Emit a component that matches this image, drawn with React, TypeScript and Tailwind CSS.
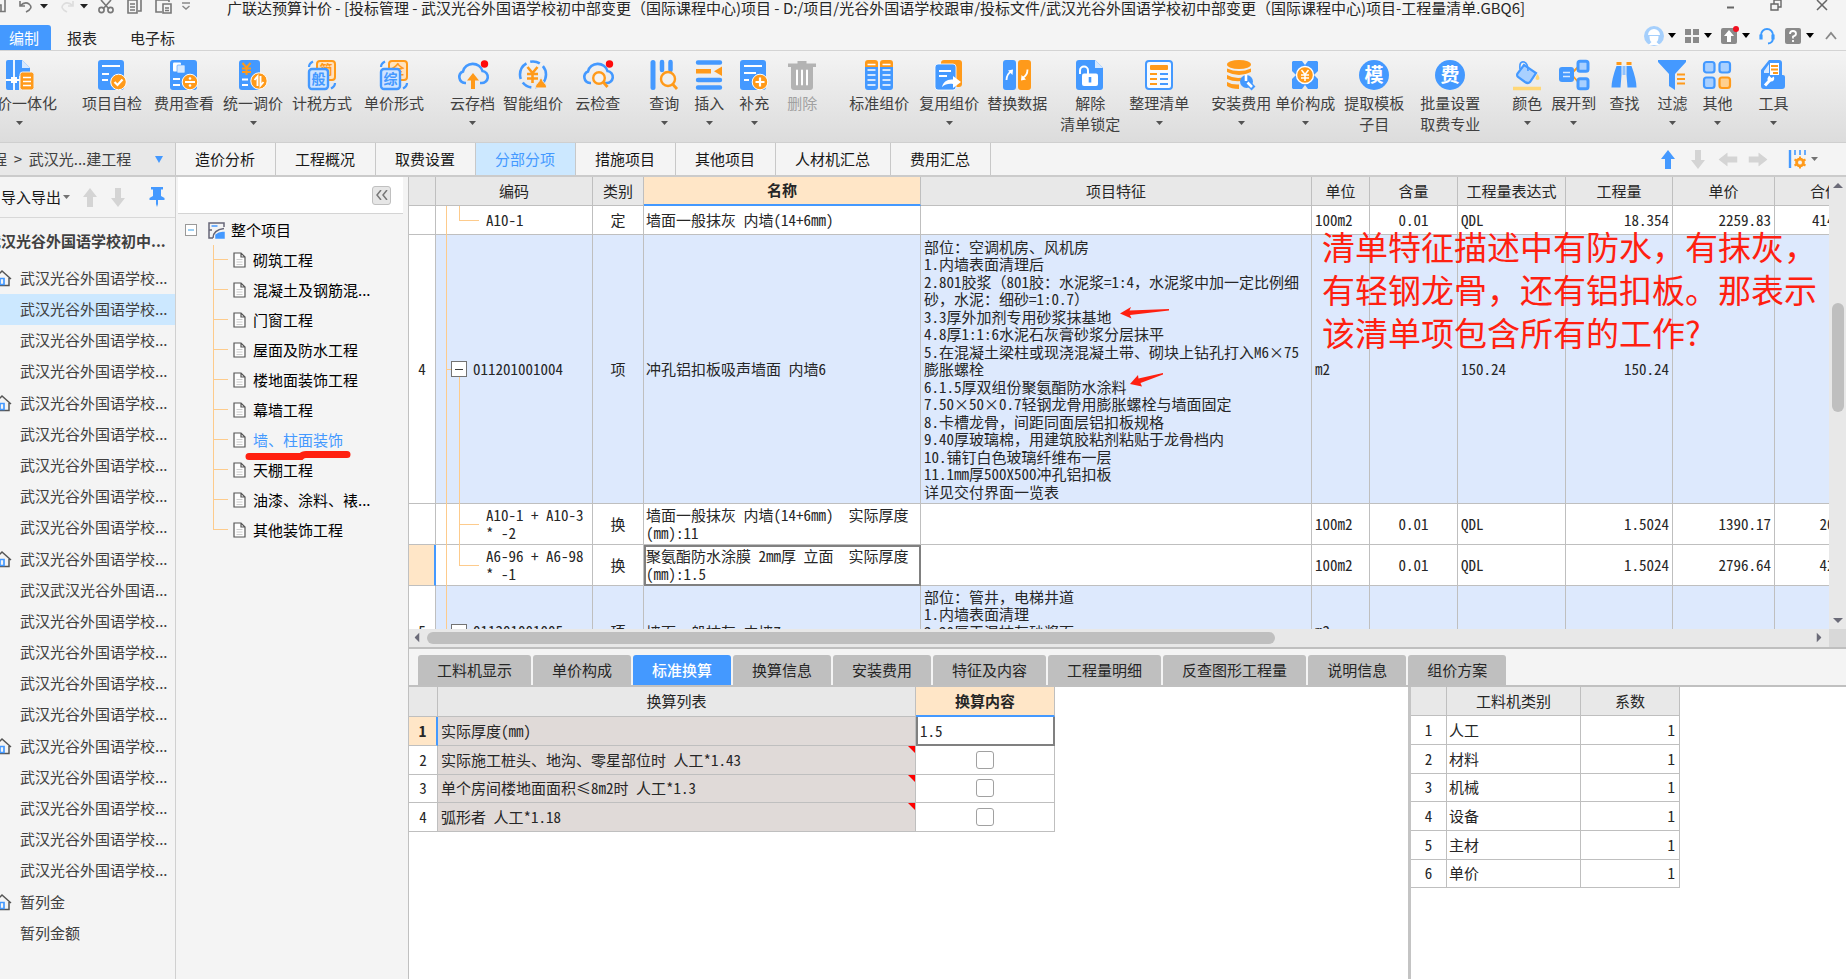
import type { ReactNode } from 'react';

const BLUE = '#4499ff';
const ORANGE = '#ff9a1a';

const Caret = ({ className = 'h-1 w-[7px] text-neutral-600' }: { className?: string }) => (
  <svg viewBox="0 0 8 5" className={`shrink-0 ${className}`} preserveAspectRatio="none">
    <path d="M0 0h8L4 5z" fill="currentColor" />
  </svg>
);

const Icon = ({ children }: { children: ReactNode }) => (
  <svg viewBox="0 0 30 30" className="h-[30px] w-[30px] shrink-0 overflow-visible">
    {children}
  </svg>
);

const Arrow = ({ className }: { className: string }) => (
  <svg viewBox="0 0 14 19" className={`h-[19px] w-[14px] shrink-0 ${className}`}>
    <path d="M7 0l7 9h-4v10H4V9H0z" fill="currentColor" />
  </svg>
);

/* ---------- Ribbon icons ---------- */

const IntegrateIcon = () => (
  <Icon>
    <path d="M3 0h14l8 8v8H14v14H3a2 2 0 0 1-2-2V2a2 2 0 0 1 2-2z" fill={BLUE} />
    <path d="M17 0l8 8h-8z" fill="#d5e8ff" />
    <path d="M9 0v30M1 20h14" stroke="#fff" strokeWidth="1.8" />
    <rect x="6" y="17" width="6" height="6" fill="#fff" />
    <rect x="15" y="12" width="14" height="18" rx="2.5" fill={ORANGE} stroke="#f0f0f0" />
    <path d="M18 17.500h8M18 21.500h8M18 25.500h8" stroke="#fff" strokeWidth="1.6" />
  </Icon>
);

const SelfCheckIcon = () => (
  <Icon>
    <rect x="1" width="26" height="30" rx="3" fill={BLUE} />
    <path d="M5 6h18M5 14h7M5 20h6" stroke="#fff" strokeWidth="2" />
    <circle cx="21.500" cy="22" r="7.800" fill={ORANGE} stroke="#fff" />
    <path d="M17.500 22l3 3 5-5.500" stroke="#fff" strokeWidth="2.200" fill="none" />
  </Icon>
);

const CostViewIcon = () => (
  <Icon>
    <rect x="1" width="27" height="30" rx="3" fill={BLUE} />
    <rect x="4" y="2.500" width="8" height="9" rx="1" fill="#fff" />
    <rect x="8" y="5" width="8" height="8" rx="1" fill="#d5e8ff" stroke={BLUE} strokeWidth=".6" />
    <path d="M4 19h7M4 25h7" stroke="#fff" strokeWidth="2" />
    <circle cx="21" cy="22" r="7.800" fill={ORANGE} stroke="#fff" />
    <path d="M16 22h10" stroke="#fff" strokeWidth="2" />
    <circle cx="21" cy="18.500" r="1.300" fill="#fff" />
    <circle cx="21" cy="25.500" r="1.300" fill="#fff" />
  </Icon>
);

const AdjustIcon = () => (
  <Icon>
    <rect x="1" width="21" height="30" rx="3" fill={BLUE} />
    <path d="M4.500 3l4 4.500L12.500 3M4 8.500h9M4 12h9M8.500 8v7" stroke={ORANGE} strokeWidth="2" fill="none" />
    <path d="M4 19.500h6M4 25h6" stroke="#fff" strokeWidth="2" />
    <circle cx="21" cy="21" r="8.200" fill={ORANGE} stroke="#fff" />
    <path d="M19.500 26V16.500l-3 3.500M22.500 16v9.500l3-3.500" stroke="#fff" strokeWidth="1.900" fill="none" />
  </Icon>
);

const SwapTextIcon = ({ front, back }: { front: string; back: string }) => (
  <Icon>
    <rect x="10" y="1" width="18" height="19" rx="3" fill="#ffe3bd" stroke={ORANGE} strokeWidth="2" />
    <text x="19" y="14" fontSize="13" fontWeight="700" textAnchor="middle" fill={ORANGE}>
      {back}
    </text>
    <rect x="2" y="9" width="19" height="20" rx="3" fill="#cfe4ff" stroke={BLUE} strokeWidth="2.400" />
    <text x="11.500" y="24" fontSize="14" fontWeight="700" textAnchor="middle" fill={BLUE}>
      {front}
    </text>
    <path d="M2 7q0-3.500 4-5.500M28 23q0 3.500-4 5.500" stroke={BLUE} strokeWidth="2.200" fill="none" />
  </Icon>
);

const CLOUD = 'M8 23H7A6 6 0 0 1 5 11.500 10 9.500 0 0 1 24.500 11 6 6 0 0 1 23 23h-1';

const CloudSaveIcon = () => (
  <Icon>
    <path d={CLOUD} stroke={BLUE} strokeWidth="2.600" fill="none" />
    <path d="M15 13l6 7.500h-4V29h-4v-8.500H9z" fill={ORANGE} />
    <circle cx="26.500" cy="4" r="3.700" fill="#ff0a0a" />
  </Icon>
);

const CloudCheckIcon = () => (
  <Icon>
    <path d={CLOUD} stroke={BLUE} strokeWidth="2.600" fill="none" />
    <circle cx="16" cy="18" r="5.800" fill="#f3f3f3" stroke={ORANGE} strokeWidth="2.400" />
    <path d="M20.500 22.500l4 4.500" stroke={ORANGE} strokeWidth="2.800" />
    <circle cx="26.500" cy="4" r="3.700" fill="#ff0a0a" />
  </Icon>
);

const SmartPriceIcon = () => (
  <Icon>
    <circle cx="15" cy="14.500" r="13" fill="none" stroke={BLUE} strokeWidth="2.600" strokeDasharray="18 4 10 4" />
    <path d="M9.500 7l5 6 5-6M9 14h11M9 18.500h11M14.500 13v10" stroke={ORANGE} strokeWidth="2.600" fill="none" />
    <path d="M23 17.500c2 2 1 4 4 6 1.500 1.500 2 4 1 4.500H18c-1-.5-.5-3 1-4.500 3-2 2-4 4-6z" fill={ORANGE} stroke="#eee" />
  </Icon>
);

const QueryIcon = () => (
  <Icon>
    <path d="M4 2.500v25" stroke={BLUE} strokeWidth="5" strokeLinecap="round" />
    <path d="M13 2v8M21.500 2v8" stroke={BLUE} strokeWidth="4.500" strokeLinecap="round" />
    <circle cx="19" cy="19" r="7" fill="#f0f0f0" stroke={ORANGE} strokeWidth="2.400" />
    <path d="M23.500 24l4.500 5" stroke={ORANGE} strokeWidth="2.800" />
  </Icon>
);

const InsertIcon = () => (
  <Icon>
    <path d="M4 2.500h22M4 20h22M4 27.500h22" stroke={BLUE} strokeWidth="4.400" strokeLinecap="round" />
    <path d="M2 9h15v4.500H2z" fill={ORANGE} />
    <path d="M28 6.500v9.500l-8-4.700z" fill={ORANGE} />
  </Icon>
);

const SupplementIcon = () => (
  <Icon>
    <rect x="1" width="26" height="30" rx="3" fill={BLUE} />
    <path d="M5 6h18M5 13h12M5 20h5" stroke="#fff" strokeWidth="2" />
    <circle cx="21" cy="22" r="7.800" fill={ORANGE} stroke="#fff" />
    <path d="M16.500 22h9M21 17.500v9" stroke="#fff" strokeWidth="2.200" />
  </Icon>
);

const DeleteIcon = () => (
  <Icon>
    <path d="M1 3.500h9.500V1h9v2.500H29V7H1z" fill="#b3b3b3" />
    <path d="M4 6h22v21a3 3 0 0 1-3 3H7a3 3 0 0 1-3-3z" fill="#b3b3b3" />
    <path d="M10 10.500v14M15 10.500v14M20 10.500v14" stroke="#fff" strokeWidth="2" strokeLinecap="round" />
  </Icon>
);

const StandardIcon = () => (
  <Icon>
    {[1, 16].map((x) => (
      <g key={x}>
        <path d={`M${x} 7V3a3 3 0 0 1 3-3h7a3 3 0 0 1 3 3v4z`} fill={ORANGE} />
        <path d={`M${x} 7h13v20a3 3 0 0 1-3 3H${x + 3}a3 3 0 0 1-3-3z`} fill={BLUE} />
        <path
          d={`M${x + 2.5} 4.500h8M${x + 2.5} 10h8M${x + 2.5} 15h8M${x + 2.5} 20h8M${x + 2.5} 25h8`}
          stroke="#fff"
          strokeWidth="1.600"
        />
      </g>
    ))}
  </Icon>
);

const ReuseIcon = () => (
  <Icon>
    <rect x="7" width="21" height="27" rx="3" fill={ORANGE} />
    <rect x="1" y="4" width="21" height="26" rx="3" fill={BLUE} stroke="#fff" strokeWidth=".8" />
    <path d="M5 11h12M5 16h8" stroke="#fff" strokeWidth="1.800" />
    <path d="M8 27c1-5 5-8 11-7.500V16l8 6-8 6v-4c-4-.5-8 0-11 3z" fill="#fff" />
  </Icon>
);

const ReplaceIcon = () => (
  <Icon>
    <rect x="1" width="13" height="30" rx="3" fill={BLUE} />
    <rect x="16" width="13" height="30" rx="3" fill={ORANGE} />
    <path d="M4.500 20q0-6 5-8.500" stroke="#fff" strokeWidth="1.800" fill="none" />
    <path d="M6 10.500l5-1-.5 5.500z" fill="#fff" />
    <path d="M25.500 9.500q0 6-5 8.500" stroke="#fff" strokeWidth="1.800" fill="none" />
    <path d="M24 19.500l-5 1 .5-5.500z" fill="#fff" />
  </Icon>
);

const UnlockIcon = () => (
  <Icon>
    <path d="M4 0h16l8 8v19a3 3 0 0 1-3 3H4a3 3 0 0 1-3-3V3a3 3 0 0 1 3-3z" fill={BLUE} />
    <path d="M20 0l8 8h-8z" fill="#d5e8ff" />
    <path d="M5 14V10.500a4 4 0 0 1 8 0V14" stroke="#fff" strokeWidth="2" fill="none" />
    <rect x="7" y="13.500" width="16" height="12.500" rx="2" fill="#fff" />
    <path d="M15 17v5.500" stroke={BLUE} strokeWidth="2.600" />
  </Icon>
);

const ArrangeIcon = () => (
  <Icon>
    <rect x="2" y="1" width="26" height="28" rx="3" fill="#f7fbff" stroke={BLUE} strokeWidth="2" />
    <rect x="6" y="5" width="18" height="5" rx="1" fill={ORANGE} />
    <path d="M6 14h7M6 19h7M6 24h7" stroke={ORANGE} strokeWidth="2" />
    <path d="M16 14h8M16 19h8M16 24h8" stroke={BLUE} strokeWidth="2" />
  </Icon>
);

const InstallIcon = () => (
  <Icon>
    <ellipse cx="13" cy="4.500" rx="12" ry="4.500" fill={ORANGE} />
    <path d="M1 8.500q12 5 24 0v3.500q-12 6-24 0zM1 15q8 4.500 18 2v3.500q-10 2-18-1.500zM1 22q5 3 12 2.500v4.500q-8 0-12-3z" fill={ORANGE} />
    <circle cx="20.500" cy="21.500" r="6.500" fill={BLUE} />
    <path d="M22 23l5.500 5.500" stroke={BLUE} strokeWidth="5.500" />
    <path d="M20 14.500v6.500M21.500 22.500l4.500 4.500" stroke="#fff" strokeWidth="2.600" />
  </Icon>
);

const ComposeIcon = () => (
  <Icon>
    <path d="M3 1h9l3 4 3-4h9l1 1v9l-4 4 4 4v9l-1 1h-9l-3-4-3 4H3l-1-1v-9l4-4-4-4V2z" fill={BLUE} />
    <circle cx="15" cy="15" r="8.500" fill={ORANGE} stroke="#fff" strokeWidth="1.400" />
    <path d="M11.500 10l3.500 4.500 3.500-4.500M11 15h8M11 18h8M15 14.500v6.500" stroke="#fff" strokeWidth="1.500" fill="none" />
  </Icon>
);

const CircleTextIcon = ({ text }: { text: string }) => (
  <Icon>
    <circle cx="15" cy="15" r="15" fill={BLUE} />
    <text x="15" y="22" fontSize="19" fontWeight="700" textAnchor="middle" fill="#fff">
      {text}
    </text>
  </Icon>
);

const ColorIcon = () => (
  <Icon>
    <path d="M12 5L24 13 18 22q-2 2-5 0l-7-5q-1.500-1.500-.5-3.500z" fill="#a9d0ff" stroke={BLUE} strokeWidth="2.200" />
    <path d="M8 9q-1-8 4-7 4 1 4 9" stroke={BLUE} strokeWidth="1.600" fill="none" />
    <path d="M25.500 14q4 5.500 0 6-4-.5 0-6z" fill="#ffd777" />
    <path d="M1 28.500h28" stroke="#ffd777" strokeWidth="3.500" />
  </Icon>
);

const ExpandIcon = () => (
  <Icon>
    <path d="M13 13l7-7M13 15l7 8" stroke={ORANGE} strokeWidth="1.800" />
    <rect x="0" y="7" width="15" height="15" rx="3" fill={BLUE} />
    <path d="M4 12.500h7M4 16.500h7" stroke="#d5e8ff" strokeWidth="1.600" />
    <rect x="19" y="1.200" width="10" height="10" rx="2" fill="#a9d0ff" stroke={BLUE} strokeWidth="3" />
    <rect x="19" y="18.800" width="10" height="10" rx="2" fill="#a9d0ff" stroke={BLUE} strokeWidth="3" />
  </Icon>
);

const FindIcon = () => (
  <Icon>
    <path d="M7.500 3.500h5M17.500 3.500h5" stroke={ORANGE} strokeWidth="3" />
    <path d="M7.500 6h5v9l-1 12.500H2.500q0-8 5-21.500zM17.500 6h5q5 13.500 5 21.500h-9l-1-12.500z" fill={BLUE} />
    <path d="M15 6v9" stroke="#8fc2ff" strokeWidth="3" />
  </Icon>
);

const FilterIcon = () => (
  <Icon>
    <path d="M1 0h28v2L18 14v16l-6-4V14L1 2z" fill={BLUE} />
    <path d="M20 14.500h8M20 19h8M20 23.500h8" stroke={ORANGE} strokeWidth="2.200" />
  </Icon>
);

const OtherIcon = () => (
  <Icon>
    <rect x="2" y="2" width="10.500" height="10.500" rx="2.500" fill="#a9d0ff" stroke={BLUE} strokeWidth="2.200" />
    <rect x="17.500" y="2" width="10.500" height="10.500" rx="2.500" fill="#a9d0ff" stroke={BLUE} strokeWidth="2.200" />
    <rect x="2" y="17.500" width="10.500" height="10.500" rx="2.500" fill="#a9d0ff" stroke={BLUE} strokeWidth="2.200" />
    <rect x="17.500" y="17.500" width="10.500" height="10.500" rx="2.500" fill="#ffd08f" stroke={ORANGE} strokeWidth="2.200" />
  </Icon>
);

const ToolIcon = () => (
  <Icon>
    <path d="M11 0h10a3 3 0 0 1 3 3v12h1a2 2 0 0 1 2 2v9a3 3 0 0 1-3 3H6a3 3 0 0 1-3-3V10z" fill={BLUE} />
    <path d="M6 11l5-7v9H6z" fill="#d5e8ff" />
    <path d="M12 3h9v12h-9z" fill="#fff" />
    <path d="M13 6h7M13 9.500h7M15 13h5" stroke={ORANGE} strokeWidth="1.800" />
    <path d="M7 25.500l5.500-6" stroke="#fff" strokeWidth="3" />
    <path d="M11 15.500l2.500 2.500 2.500-1.500q1 5-3 5t-3.500-3z" fill="#fff" />
  </Icon>
);

interface RibbonItem {
  label: string;
  sub?: string;
  caret?: boolean;
  disabled?: boolean;
  gap: string;
  icon: ReactNode;
}

const RIBBON: RibbonItem[] = [
  { label: '量价一体化', caret: true, gap: '-ml-[18px]', icon: <IntegrateIcon /> },
  { label: '项目自检', gap: 'ml-[25px]', icon: <SelfCheckIcon /> },
  { label: '费用查看', gap: 'ml-3', icon: <CostViewIcon /> },
  { label: '统一调价', caret: true, gap: 'ml-[9px]', icon: <AdjustIcon /> },
  { label: '计税方式', gap: 'ml-[9px]', icon: <SwapTextIcon front="般" back="简" /> },
  { label: '单价形式', gap: 'ml-3', icon: <SwapTextIcon front="综" back="全" /> },
  { label: '云存档', caret: true, gap: 'ml-[26px]', icon: <CloudSaveIcon /> },
  { label: '智能组价', gap: 'ml-2', icon: <SmartPriceIcon /> },
  { label: '云检查', gap: 'ml-3', icon: <CloudCheckIcon /> },
  { label: '查询', caret: true, gap: 'ml-[29px]', icon: <QueryIcon /> },
  { label: '插入', caret: true, gap: 'ml-[15px]', icon: <InsertIcon /> },
  { label: '补充', caret: true, gap: 'ml-[15px]', icon: <SupplementIcon /> },
  { label: '删除', disabled: true, gap: 'ml-[18px]', icon: <DeleteIcon /> },
  { label: '标准组价', gap: 'ml-8', icon: <StandardIcon /> },
  { label: '复用组价', caret: true, gap: 'ml-2.5', icon: <ReuseIcon /> },
  { label: '替换数据', gap: 'ml-2', icon: <ReplaceIcon /> },
  { label: '解除', sub: '清单锁定', gap: 'ml-[13px]', icon: <UnlockIcon /> },
  { label: '整理清单', caret: true, gap: 'ml-[9px]', icon: <ArrangeIcon /> },
  { label: '安装费用', caret: true, gap: 'ml-[22px]', icon: <InstallIcon /> },
  { label: '单价构成', caret: true, gap: 'ml-1', icon: <ComposeIcon /> },
  { label: '提取模板', sub: '子目', gap: 'ml-[9px]', icon: <CircleTextIcon text="模" /> },
  { label: '批量设置', sub: '取费专业', gap: 'ml-4', icon: <CircleTextIcon text="费" /> },
  { label: '颜色', caret: true, gap: 'ml-8', icon: <ColorIcon /> },
  { label: '展开到', caret: true, gap: 'ml-[9px]', icon: <ExpandIcon /> },
  { label: '查找', gap: 'ml-[13px]', icon: <FindIcon /> },
  { label: '过滤', caret: true, gap: 'ml-[18px]', icon: <FilterIcon /> },
  { label: '其他', caret: true, gap: 'ml-[15px]', icon: <OtherIcon /> },
  { label: '工具', caret: true, gap: 'ml-[26px]', icon: <ToolIcon /> },
];

/* ---------- Top area ---------- */

const TitleBar = () => (
  <header className="flex h-[18px] items-start">
    <div className="flex w-[227px] shrink-0 items-start">
      <svg viewBox="0 0 227 14" className="h-[14px] w-[227px]" fill="none" stroke="#777" strokeWidth="1.600">
        <path d="M-8 11.500H5V0M-8 5h9v6" />
        <path d="M20 1v5h5M20 6q5-5 9-2 5 4-3 8" />
        <path d="M40 4h8l-4 4.500z" fill="#222" stroke="none" />
        <path d="M73 1v5h-5M73 6q-5-5-9-2-5 4 3 8" stroke="#ddd" />
        <path d="M80 4h8l-4 4.500z" fill="#222" stroke="none" />
        <path d="M101 0l8 9M111 0l-8 9" />
        <circle cx="101.500" cy="10" r="2.600" />
        <circle cx="110.500" cy="10" r="2.600" />
        <path d="M131-2h10V11h-3M128 0h9v13h-9zM130 4h5M130 7h5M130 10h5" />
        <path d="M162 12h-6V0h13v2M163 4h8v9h-8zM165 8h4M165 10.500h4" />
        <path d="M182 3h8M182.500 6l3.500 3 3.500-3" stroke="#888" strokeWidth="1.400" />
      </svg>
    </div>
    <h1 className="text-[15px] leading-[15px] whitespace-nowrap text-neutral-800">
      广联达预算计价 - [投标管理 - 武汉光谷外国语学校初中部变更（国际课程中心)项目 - D:/项目/光谷外国语学校跟审/投标文件/武汉光谷外国语学校初中部变更（国际课程中心)项目-工程量清单.GBQ6]
    </h1>
    <div className="mr-[18px] ml-auto flex shrink-0 gap-[34px]">
      <button aria-label="最小化">
        <svg viewBox="0 0 12 12" className="size-3" stroke="#666" strokeWidth="2">
          <path d="M3 7.500h7" />
        </svg>
      </button>
      <button aria-label="还原">
        <svg viewBox="0 0 12 12" className="size-3" fill="none" stroke="#666" strokeWidth="1.400">
          <path d="M1 4h7v6H1zM4 4V0h7v7H8" />
        </svg>
      </button>
      <button aria-label="关闭">
        <svg viewBox="0 0 12 12" className="size-3" fill="none" stroke="#666" strokeWidth="1.500">
          <path d="M1 0l10 10M11 0L1 10" />
        </svg>
      </button>
    </div>
  </header>
);

const BLACK_CARET = 'ml-1 h-[5px] w-2 text-black';

const MenuBar = () => (
  <nav className="flex h-[33px] items-end border-b border-[#d4d4d4] text-[15px] text-neutral-800">
    <button className="h-[25px] w-[51px] rounded-tr-[3px] bg-[#4499ff] pr-3 text-right leading-[25px] text-white">
      编制
    </button>
    <button className="ml-4 h-[25px] leading-[25px]">报表</button>
    <button className="ml-[33px] h-[25px] leading-[25px]">电子标</button>
    <div className="mr-[9px] ml-auto flex h-[29px] items-center">
      <button aria-label="用户" className="flex items-center">
        <svg viewBox="0 0 20 20" className="size-5">
          <circle cx="10" cy="10" r="10" fill="#a5cffc" />
          <path d="M4 9a6 6 0 0 1 12 0zM5.500 10h9q0 5-2 6l3 3h-11l3-3q-2-1-2-6z" fill="#fff" />
        </svg>
        <Caret className={BLACK_CARET} />
      </button>
      <button aria-label="布局" className="ml-2 flex items-center">
        <svg viewBox="0 0 16 16" className="size-4" fill="#8a8a8a">
          <path d="M1 1h6v6H1zM9 1h6v6H9zM1 9h6v6H1zM9 9h6v6H9z" />
        </svg>
        <Caret className={BLACK_CARET} />
      </button>
      <button aria-label="升级" className="ml-2 flex items-center">
        <svg viewBox="0 0 18 18" className="size-[18px] overflow-visible">
          <rect x="1" y="1" width="16" height="16" rx="2" fill="#8a8a8a" />
          <path d="M9 3l5 6h-3v6H7V9H4z" fill="#fff" />
          <circle cx="16" cy="2" r="3" fill="#f01020" />
        </svg>
        <Caret className={BLACK_CARET} />
      </button>
      <button aria-label="客服" className="ml-2">
        <svg viewBox="0 0 18 18" className="size-[18px]" fill="none" stroke="#3d9bff">
          <path d="M3 10V8a6 6 0 0 1 12 0v3q0 5-5 5.500" strokeWidth="1.800" />
          <path d="M3 7.500v5M15 7.500v5" strokeWidth="3.200" />
        </svg>
      </button>
      <button aria-label="帮助" className="ml-2 flex items-center">
        <svg viewBox="0 0 18 18" className="size-[18px]">
          <rect x="1" y="1" width="16" height="16" rx="2" fill="#8a8a8a" />
          <path d="M6 7q0-3 3-3t3 2.700Q12 8.500 9 9.500v2M9 13v2" stroke="#fff" strokeWidth="1.800" fill="none" />
        </svg>
        <Caret className={BLACK_CARET} />
      </button>
      <button aria-label="收起功能区" className="ml-[11px]">
        <svg viewBox="0 0 12 10" className="h-2.5 w-3" fill="none" stroke="#888" strokeWidth="1.800">
          <path d="M1 8l5-6 5 6" />
        </svg>
      </button>
    </div>
  </nav>
);

const Ribbon = () => (
  <div className="flex h-[92px] items-start border-b border-[#cfcfcf] bg-linear-to-b from-[#f4f4f4] to-[#dcdcdc] pt-[9px]">
    {RIBBON.map(({ label, sub, caret, disabled, gap, icon }) => (
      <button
        key={label}
        className={`flex shrink-0 flex-col items-center text-[15px] leading-5 whitespace-nowrap ${gap} ${
          disabled ? 'text-neutral-400' : 'text-neutral-700'
        }`}
      >
        {icon}
        <span className="mt-[3px]">{label}</span>
        {sub && <span className="mt-px">{sub}</span>}
        {caret && <Caret className="mt-2 h-1 w-[7px] text-neutral-600" />}
      </button>
    ))}
  </div>
);

const MAIN_TABS = ['造价分析', '工程概况', '取费设置', '分部分项', '措施项目', '其他项目', '人材机汇总', '费用汇总'];

const MainTabs = () => (
  <div className="flex h-[34px] shrink-0 border-b-2 border-[#cbcbcb] text-[15px] text-neutral-900">
    <button className="flex w-[176px] shrink-0 items-center overflow-hidden border-r border-[#c8c8c8] bg-[#e8e8e8] whitespace-nowrap text-neutral-700">
      <span className="-ml-2">程&nbsp;&nbsp;&gt;&nbsp;&nbsp;武汉光...建工程</span>
      <Caret className="mr-3 ml-auto h-[7px] w-2 text-[#4499ff]" />
    </button>
    {MAIN_TABS.map((tab) => (
      <button
        key={tab}
        className={`shrink-0 border-r border-[#c8c8c8] px-[19px] nth-[n+2]:pr-5 ${
          tab === '分部分项' ? 'bg-[#cce8ff] text-[#4499ff]' : ''
        }`}
      >
        {tab}
      </button>
    ))}
    <div className="mr-7 ml-auto flex items-center">
      <Arrow className="text-[#4499ff]" />
      <Arrow className="ml-4 rotate-180 text-neutral-300" />
      <Arrow className="ml-4 -rotate-90 text-neutral-300" />
      <Arrow className="ml-4 rotate-90 text-neutral-300" />
      <svg viewBox="0 0 18 20" className="ml-[23px] h-5 w-[18px]">
        <path d="M2 1v18" stroke={BLUE} strokeWidth="2.400" />
        <path d="M7 1v5M12 1v5M17 1v5" stroke={BLUE} strokeWidth="1.600" />
        <circle cx="12" cy="13.500" r="3.500" fill="none" stroke={ORANGE} strokeWidth="2.600" />
        <path d="M12 7.500v12M6.500 10.500l11 6M17.500 10.500l-11 6" stroke={ORANGE} strokeWidth="2" />
        <circle cx="12" cy="13.500" r="2" fill="#f4f4f4" />
      </svg>
      <Caret className="ml-[5px] h-1 w-[7px] text-neutral-500" />
    </div>
  </div>
);

/* ---------- Side panels ---------- */

const SCHOOL = '武汉光谷外国语学校...';

const PROJECTS: { name: string; home?: boolean; selected?: boolean }[] = [
  { name: SCHOOL, home: true },
  { name: SCHOOL, selected: true },
  { name: SCHOOL },
  { name: SCHOOL },
  { name: SCHOOL, home: true },
  { name: SCHOOL },
  { name: SCHOOL },
  { name: SCHOOL },
  { name: SCHOOL },
  { name: SCHOOL, home: true },
  { name: '武汉武汉光谷外国语...' },
  { name: SCHOOL },
  { name: SCHOOL },
  { name: SCHOOL },
  { name: SCHOOL },
  { name: SCHOOL, home: true },
  { name: SCHOOL },
  { name: SCHOOL },
  { name: SCHOOL },
  { name: SCHOOL },
  { name: '暂列金', home: true },
  { name: '暂列金额' },
];

const ProjectPanel = () => (
  <aside className="w-[176px] shrink-0 overflow-hidden border-r border-[#d0d0d0] text-[15px] whitespace-nowrap text-neutral-700">
    <div className="flex h-[41px] items-center border-b border-[#d8d8d8] pl-px">
      <button className="flex items-center text-neutral-900">
        导入导出
        <Caret className="ml-0.5 h-1 w-[7px] text-neutral-500" />
      </button>
      <Arrow className="ml-[13px] text-neutral-300" />
      <Arrow className="ml-3.5 rotate-180 text-neutral-300" />
      <svg viewBox="0 0 16 20" className="ml-6 h-5 w-4">
        <path d="M2 0h12v2.500h-2V9l3.500 2v2H9v4l-1 3-1-3v-4H.5v-2L4 9V2.500H2z" fill={BLUE} />
      </svg>
    </div>
    <div className="-ml-3.5 h-11 leading-[46px] font-bold">武汉光谷外国语学校初中...</div>
    <ul>
      {PROJECTS.map(({ name, home, selected }, i) => (
        <li
          key={i}
          className={`flex items-center ${home ? 'h-8' : 'h-[31px]'} ${selected ? 'bg-[#cce8ff]' : ''}`}
        >
          <span className="w-5 shrink-0">
            {home && (
              <svg viewBox="0 0 12 18" className="h-[18px] w-3" fill="none" stroke="#555" strokeWidth="1.500">
                <path d="M-6 10L2 2l9 8M9 9v7.500H-4" />
                <path d="M0 9.500h4v6H0z" stroke={BLUE} strokeWidth="1.700" />
              </svg>
            )}
          </span>
          {name}
        </li>
      ))}
    </ul>
  </aside>
);

const SECTIONS = [
  '砌筑工程',
  '混凝土及钢筋混...',
  '门窗工程',
  '屋面及防水工程',
  '楼地面装饰工程',
  '幕墙工程',
  '墙、柱面装饰',
  '天棚工程',
  '油漆、涂料、裱...',
  '其他装饰工程',
];

const SectionPanel = () => (
  <aside className="w-[232px] shrink-0 pr-[5px] pl-0.5 text-[15px] text-black">
    <div className="flex h-[37px] items-center justify-end border-b border-[#d4d4d4] bg-white pr-3">
      <button
        aria-label="折叠"
        className="flex size-[19px] items-center justify-center rounded-[3px] border border-[#c0c0c0] bg-[#e6e6e6]"
      >
        <svg viewBox="0 0 12 10" className="h-2.5 w-3" fill="none" stroke="#777" strokeWidth="1.500">
          <path d="M5 0L1 5l4 5M11 0L7 5l4 5" />
        </svg>
      </button>
    </div>
    <div className="mt-px flex h-[30px] items-center pl-[7px]">
      <svg viewBox="0 0 12 12" className="size-3" fill="#fff" stroke="#999">
        <rect x=".5" y=".5" width="11" height="11" />
        <path d="M3 6h6" stroke="#3aa0e8" />
      </svg>
      <svg viewBox="0 0 17 17" className="ml-[11px] size-[17px]" fill="none" stroke="#667" strokeWidth="1.500">
        <path d="M16 5V1H1v15h4M1 8h3M5 16q0-8 11-9.500" />
        <path d="M3.500 4h6" stroke={BLUE} />
        <path d="M8 16v-3q3-3 8-2.500V16z" fill={BLUE} stroke={BLUE} />
      </svg>
      <span className="ml-1.5">整个项目</span>
    </div>
    <ul className="pl-[35px]">
      {SECTIONS.map((name, i) => {
        const active = name === '墙、柱面装饰';
        return (
          <li key={name} className="relative flex h-[30px] items-center pl-5">
            <span
              className={`absolute top-0 left-0 border-l border-[#fdcb8c] ${
                i === SECTIONS.length - 1 ? 'h-[15px]' : 'h-full'
              }`}
            />
            <span className="absolute top-[14px] left-0 w-[15px] border-t border-[#fdcb8c]" />
            <svg viewBox="0 0 13 16" className="h-4 w-[13px]" fill="#fdfdfd" stroke="#555" strokeWidth="1.200">
              <path d="M1 1h7l4 4v10H1zM8 1v4h4" />
              <path d="M3.500 7.500h6M3.500 10h6M3.500 12.500h6" stroke="#ccc" strokeWidth="1" />
            </svg>
            <span className={`ml-[7px] ${active ? 'text-[#4499ff]' : ''}`}>{name}</span>
            {/* Hand drawn underline */}
            {active && (
              <svg viewBox="0 0 106 10" className="absolute top-[26px] left-8 z-10 h-2.5 w-[106px]">
                <path d="M4 5.500h52q2-2 5-2h41" stroke="#ff2010" strokeWidth="7" strokeLinecap="round" fill="none" />
              </svg>
            )}
          </li>
        );
      })}
    </ul>
  </aside>
);

/* ---------- Bill table ---------- */

const MONO = "font-['Noto_Sans_Mono_CJK_SC','Noto_Sans_CJK_SC',monospace]";

type Branch = 'parent' | 'mid' | 'last';

interface BillRow {
  no?: string;
  code: string[];
  branch: Branch;
  kind: string;
  name: string[];
  feature?: string[];
  unit?: string;
  content?: string;
  expr?: string;
  qty?: string;
  price?: string;
  total?: string;
  selected?: boolean;
  height: string;
}

const BILL_ROWS: BillRow[] = [
  {
    code: ['A10-1'],
    branch: 'last',
    kind: '定',
    name: ['墙面一般抹灰 内墙(14+6mm)'],
    unit: '100m2',
    content: '0.01',
    expr: 'QDL',
    qty: '18.354',
    price: '2259.83',
    total: '41476.92',
    height: 'h-[29px]',
  },
  {
    no: '4',
    code: ['011201001004'],
    branch: 'parent',
    kind: '项',
    name: ['冲孔铝扣板吸声墙面 内墙6'],
    feature: [
      '部位：空调机房、风机房',
      '1.内墙表面清理后',
      '2.801胶浆（801胶：水泥浆=1:4，水泥浆中加一定比例细',
      '砂，水泥：细砂=1:0.7）',
      '3.3厚外加剂专用砂浆抹基地',
      '4.8厚1:1:6水泥石灰膏砂浆分层抹平',
      '5.在混凝土梁柱或现浇混凝土带、砌块上钻孔打入M6×75',
      '膨胀螺栓',
      '6.1.5厚双组份聚氨酯防水涂料',
      '7.50×50×0.7轻钢龙骨用膨胀螺栓与墙面固定',
      '8.卡槽龙骨，间距同面层铝扣板规格',
      '9.40厚玻璃棉，用建筑胶粘剂粘贴于龙骨档内',
      '10.铺钉白色玻璃纤维布一层',
      '11.1mm厚500X500冲孔铝扣板',
      '详见交付界面一览表',
    ],
    unit: 'm2',
    expr: '150.24',
    qty: '150.24',
    height: 'h-[269px]',
  },
  {
    code: ['A10-1 + A10-3', '* -2'],
    branch: 'mid',
    kind: '换',
    name: ['墙面一般抹灰 内墙(14+6mm)  实际厚度', '(mm):11'],
    unit: '100m2',
    content: '0.01',
    expr: 'QDL',
    qty: '1.5024',
    price: '1390.17',
    total: '2088.59',
    height: 'h-[41px]',
  },
  {
    code: ['A6-96 + A6-98', '* -1'],
    branch: 'last',
    kind: '换',
    name: ['聚氨酯防水涂膜 2mm厚 立面  实际厚度', '(mm):1.5'],
    unit: '100m2',
    content: '0.01',
    expr: 'QDL',
    qty: '1.5024',
    price: '2796.64',
    total: '4201.67',
    selected: true,
    height: 'h-[41px]',
  },
  {
    no: '5',
    code: ['011201001005'],
    branch: 'parent',
    kind: '项',
    name: ['墙面一般抹灰 内墙7'],
    feature: ['部位：管井，电梯井道', '1.内墙表面清理', '2.20厚干混抹灰砂浆面', '3.刷专用界面剂一遍', '详见交付界面一览表'],
    unit: 'm2',
    height: 'h-[92px]',
  },
];

const LINE = 'absolute border-[#fdcb8c]';

const CodeCell = ({ code, branch }: { code: string[]; branch: Branch }) => (
  <>
    <span className={`${LINE} top-0 -bottom-px left-[10px] border-l`} />
    {branch === 'parent' ? (
      <>
        <span className={`${LINE} top-1/2 left-[10px] w-[5px] border-t`} />
        <span className={`${LINE} top-1/2 -bottom-px left-[23px] border-l`} />
        <button
          aria-label="展开或折叠"
          className="absolute top-1/2 left-[15px] flex size-4 -translate-y-1/2 items-center justify-center border border-neutral-500 bg-white"
        >
          <span className="w-2 border-t border-neutral-700" />
        </button>
        <div className="pl-[37px]">{code}</div>
      </>
    ) : (
      <>
        <span className={`${LINE} top-0 left-[23px] border-l ${branch === 'last' ? 'bottom-1/2' : '-bottom-px'}`} />
        <span className={`${LINE} top-1/2 left-[23px] w-5 border-t`} />
        <div className="pl-[50px] leading-[18px]">
          {code.map((line) => (
            <div key={line}>{line}</div>
          ))}
        </div>
      </>
    )}
  </>
);

const COLUMNS = ['', '编码', '类别', '名称', '项目特征', '单位', '含量', '工程量表达式', '工程量', '单价', '合价'];

const TH = 'border-r border-b border-[#bfbfbf] bg-[#e8e8e8] p-0 text-center font-normal';
const TH_ACTIVE = 'border-r border-b-2 border-r-[#bfbfbf] border-b-[#4499ff] bg-[#ffe6c7] p-0 text-center font-bold';
const TD = 'border-r border-b border-[#bfbfbf] p-0';

const BillTable = () => (
  <table
    className={`w-[1467px] table-fixed border-separate border-spacing-0 text-[15px] whitespace-pre text-neutral-800 ${MONO}`}
  >
    <colgroup>
      <col className="w-[27px]" />
      <col className="w-[157px]" />
      <col className="w-[51px]" />
      <col className="w-[277px]" />
      <col className="w-[391px]" />
      <col className="w-[58px]" />
      <col className="w-[88px]" />
      <col className="w-[108px]" />
      <col className="w-[107px]" />
      <col className="w-[102px]" />
      <col className="w-[101px]" />
    </colgroup>
    <thead>
      <tr className="h-[29px]">
        {COLUMNS.map((col, i) => (
          <th key={i} className={col === '名称' ? TH_ACTIVE : TH}>
            {col}
          </th>
        ))}
      </tr>
    </thead>
    <tbody>
      {BILL_ROWS.map((row, i) => (
        <tr key={i} className={`${row.height} ${row.branch === 'parent' ? 'bg-[#dde9fd]' : 'bg-white'}`}>
          <td
            className={
              row.selected
                ? 'border-r-2 border-b border-r-[#4499ff] border-b-[#bfbfbf] bg-[#ffe6c7] p-0'
                : `${TD} bg-white text-center`
            }
          >
            {row.no}
          </td>
          <td className={`${TD} relative`}>
            <CodeCell code={row.code} branch={row.branch} />
          </td>
          <td className={`${TD} text-center`}>{row.kind}</td>
          <td
            className={`${TD} pl-0.5 leading-[18px] ${
              row.selected ? 'outline-2 -outline-offset-2 outline-[#808080]' : ''
            }`}
          >
            {row.name.map((line) => (
              <div key={line}>{line}</div>
            ))}
          </td>
          <td className={`${TD} pl-[3px]`}>
            {row.feature?.map((line) => (
              <div key={line} className="h-[17px] leading-[17px] even:h-[18px]">
                {line}
              </div>
            ))}
          </td>
          <td className={`${TD} pl-[3px]`}>{row.unit}</td>
          <td className={`${TD} text-center`}>{row.content}</td>
          <td className={`${TD} pl-[3px]`}>{row.expr}</td>
          <td className={`${TD} pr-[3px] text-right`}>{row.qty}</td>
          <td className={`${TD} pr-[3px] text-right`}>{row.price}</td>
          <td className={`${TD} pr-[3px] text-right`}>{row.total}</td>
        </tr>
      ))}
    </tbody>
  </table>
);

const BillPane = () => (
  <section className="relative flex min-h-0 flex-[471] flex-col">
    <div className="flex min-h-0 flex-1">
      <div className="min-w-0 flex-1 overflow-hidden bg-white">
        <BillTable />
      </div>
      <div className="flex w-[17px] shrink-0 flex-col items-center bg-[#e8e8e8] py-1.5">
        <Caret className="h-[5px] w-2.5 rotate-180 text-[#6b6b78]" />
        <div className="mt-[115px] h-[109px] w-3 rounded-full bg-[#bfbfbf]" />
        <Caret className="mt-auto h-[5px] w-2.5 text-[#6b6b78]" />
      </div>
    </div>
    <div className="flex h-[18px] shrink-0 items-center bg-[#e8e8e8]">
      <Caret className="ml-[3px] h-[5px] w-2.5 rotate-90 text-[#6b6b78]" />
      <div className="ml-[5px] h-3 w-[59%] rounded-full bg-[#bfbfbf]" />
      <Caret className="mr-[5px] ml-auto h-[5px] w-2.5 -rotate-90 text-[#6b6b78]" />
      <div className="h-full w-[17px] bg-[#d8d8d8]" />
    </div>

    {/* Reviewer's notes over the table */}
    <p className="absolute top-12 left-[913px] text-[33px] leading-[43px] whitespace-nowrap text-[#ff2010]">
      清单特征描述中有防水，有抹灰，
      <br />
      有轻钢龙骨，还有铝扣板。那表示
      <br />
      该清单项包含所有的工作?
    </p>
    <svg viewBox="0 0 50 12" className="absolute top-[130px] left-[711px] h-3 w-[50px]" fill="#ff2010">
      <path d="M0 6.500L11 0 9.500 3.500 49 2v1.500L10 8l1.500 3.500z" />
    </svg>
    <svg viewBox="0 0 34 14" className="absolute top-[196px] left-[721px] h-3.5 w-[34px]" fill="#ff2010">
      <path d="M0 11L8 2l.5 3.500L33 0v1.500L10.500 10l1.500 3.500z" />
    </svg>
  </section>
);

/* ---------- Detail pane ---------- */

const DETAIL_TABS = [
  '工料机显示',
  '单价构成',
  '标准换算',
  '换算信息',
  '安装费用',
  '特征及内容',
  '工程量明细',
  '反查图形工程量',
  '说明信息',
  '组价方案',
];

const CONVERSIONS = ['实际施工桩头、地沟、零星部位时 人工*1.43', '单个房间楼地面面积≤8m2时 人工*1.3', '弧形者 人工*1.18'];

const FACTORS = ['人工', '材料', '机械', '设备', '主材', '单价'];

const ConversionTable = () => (
  <table
    className={`w-[646px] table-fixed border-separate border-spacing-0 text-[15px] whitespace-pre text-neutral-800 ${MONO}`}
  >
    <colgroup>
      <col className="w-[29px]" />
      <col className="w-[478px]" />
      <col className="w-[139px]" />
    </colgroup>
    <thead>
      <tr className="h-[30px]">
        <th className={TH} />
        <th className={TH}>换算列表</th>
        <th className={TH_ACTIVE}>换算内容</th>
      </tr>
    </thead>
    <tbody>
      <tr className="h-[29px]">
        <td className="border-r-2 border-b border-r-[#4499ff] border-b-[#bfbfbf] bg-[#ffe6c7] p-0 text-center font-bold">
          1
        </td>
        <td className={`${TD} bg-[#e0dad8] pl-[3px]`}>
          <label htmlFor="thickness">实际厚度(mm)</label>
        </td>
        <td className="border-2 border-t-0 border-[#808080] p-0">
          <input id="thickness" defaultValue="1.5" className="block h-6 w-full bg-transparent pl-0.5 outline-none" />
        </td>
      </tr>
      {CONVERSIONS.map((text, i) => (
        <tr key={text} className={i === 1 ? 'h-[28px]' : 'h-[29px]'}>
          <td className={`${TD} text-center`}>{i + 2}</td>
          <td className={`${TD} relative bg-[#e0dad8] pl-[3px]`}>
            <label htmlFor={`conversion-${i}`}>{text}</label>
            <svg viewBox="0 0 7 7" className="absolute top-0 right-0 size-[7px]">
              <path d="M0 0h7v7z" fill="#ff0000" />
            </svg>
          </td>
          <td className={TD}>
            <input
              id={`conversion-${i}`}
              type="checkbox"
              className="mx-auto block size-[18px] appearance-none rounded-[3px] border border-neutral-400 bg-white"
            />
          </td>
        </tr>
      ))}
    </tbody>
  </table>
);

const FactorTable = () => (
  <table className={`w-[269px] table-fixed border-separate border-spacing-0 text-[15px] text-neutral-800 ${MONO}`}>
    <colgroup>
      <col className="w-9" />
      <col className="w-[134px]" />
      <col className="w-[99px]" />
    </colgroup>
    <thead>
      <tr className="h-[29px]">
        <th className={TH} />
        <th className={TH}>工料机类别</th>
        <th className={TH}>系数</th>
      </tr>
    </thead>
    <tbody>
      {FACTORS.map((name, i) => (
        <tr key={name} className={i % 3 === 2 ? 'h-[28px]' : 'h-[29px]'}>
          <td className={`${TD} text-center`}>{i + 1}</td>
          <td className={`${TD} pl-0.5`}>{name}</td>
          <td className={`${TD} pr-1 text-right`}>1</td>
        </tr>
      ))}
    </tbody>
  </table>
);

const DetailPane = () => (
  <section className="flex min-h-0 flex-[331] flex-col border-t-2 border-[#bfbfbf]">
    <div className="flex shrink-0 items-end gap-0.5 border-b-2 border-[#c0c0c0] pt-1.5 pl-[9px] text-[15px] text-neutral-800">
      {DETAIL_TABS.map((tab) => (
        <button
          key={tab}
          className={`h-[30px] shrink-0 rounded-t-[3px] px-[19px] ${
            tab === '标准换算' ? 'bg-[#4499ff] font-medium text-white' : 'bg-[#bfbfbf]'
          }`}
        >
          {tab}
        </button>
      ))}
    </div>
    <div className="flex min-h-0 flex-1 bg-white">
      <div className="min-w-0 flex-1">
        <ConversionTable />
      </div>
      <div className="w-[438px] shrink-0 border-l-3 border-[#c4c4c4]">
        <FactorTable />
      </div>
    </div>
  </section>
);

export default function App() {
  return (
    <div className="flex h-screen flex-col overflow-hidden bg-[#f4f4f4] font-['Noto_Sans_CJK_SC',sans-serif]">
      <TitleBar />
      <MenuBar />
      <Ribbon />
      <MainTabs />
      <div className="flex min-h-0 flex-1">
        <ProjectPanel />
        <SectionPanel />
        <main className="flex min-w-0 flex-1 flex-col border-l border-[#c0c0c0]">
          <BillPane />
          <DetailPane />
        </main>
      </div>
    </div>
  );
}
